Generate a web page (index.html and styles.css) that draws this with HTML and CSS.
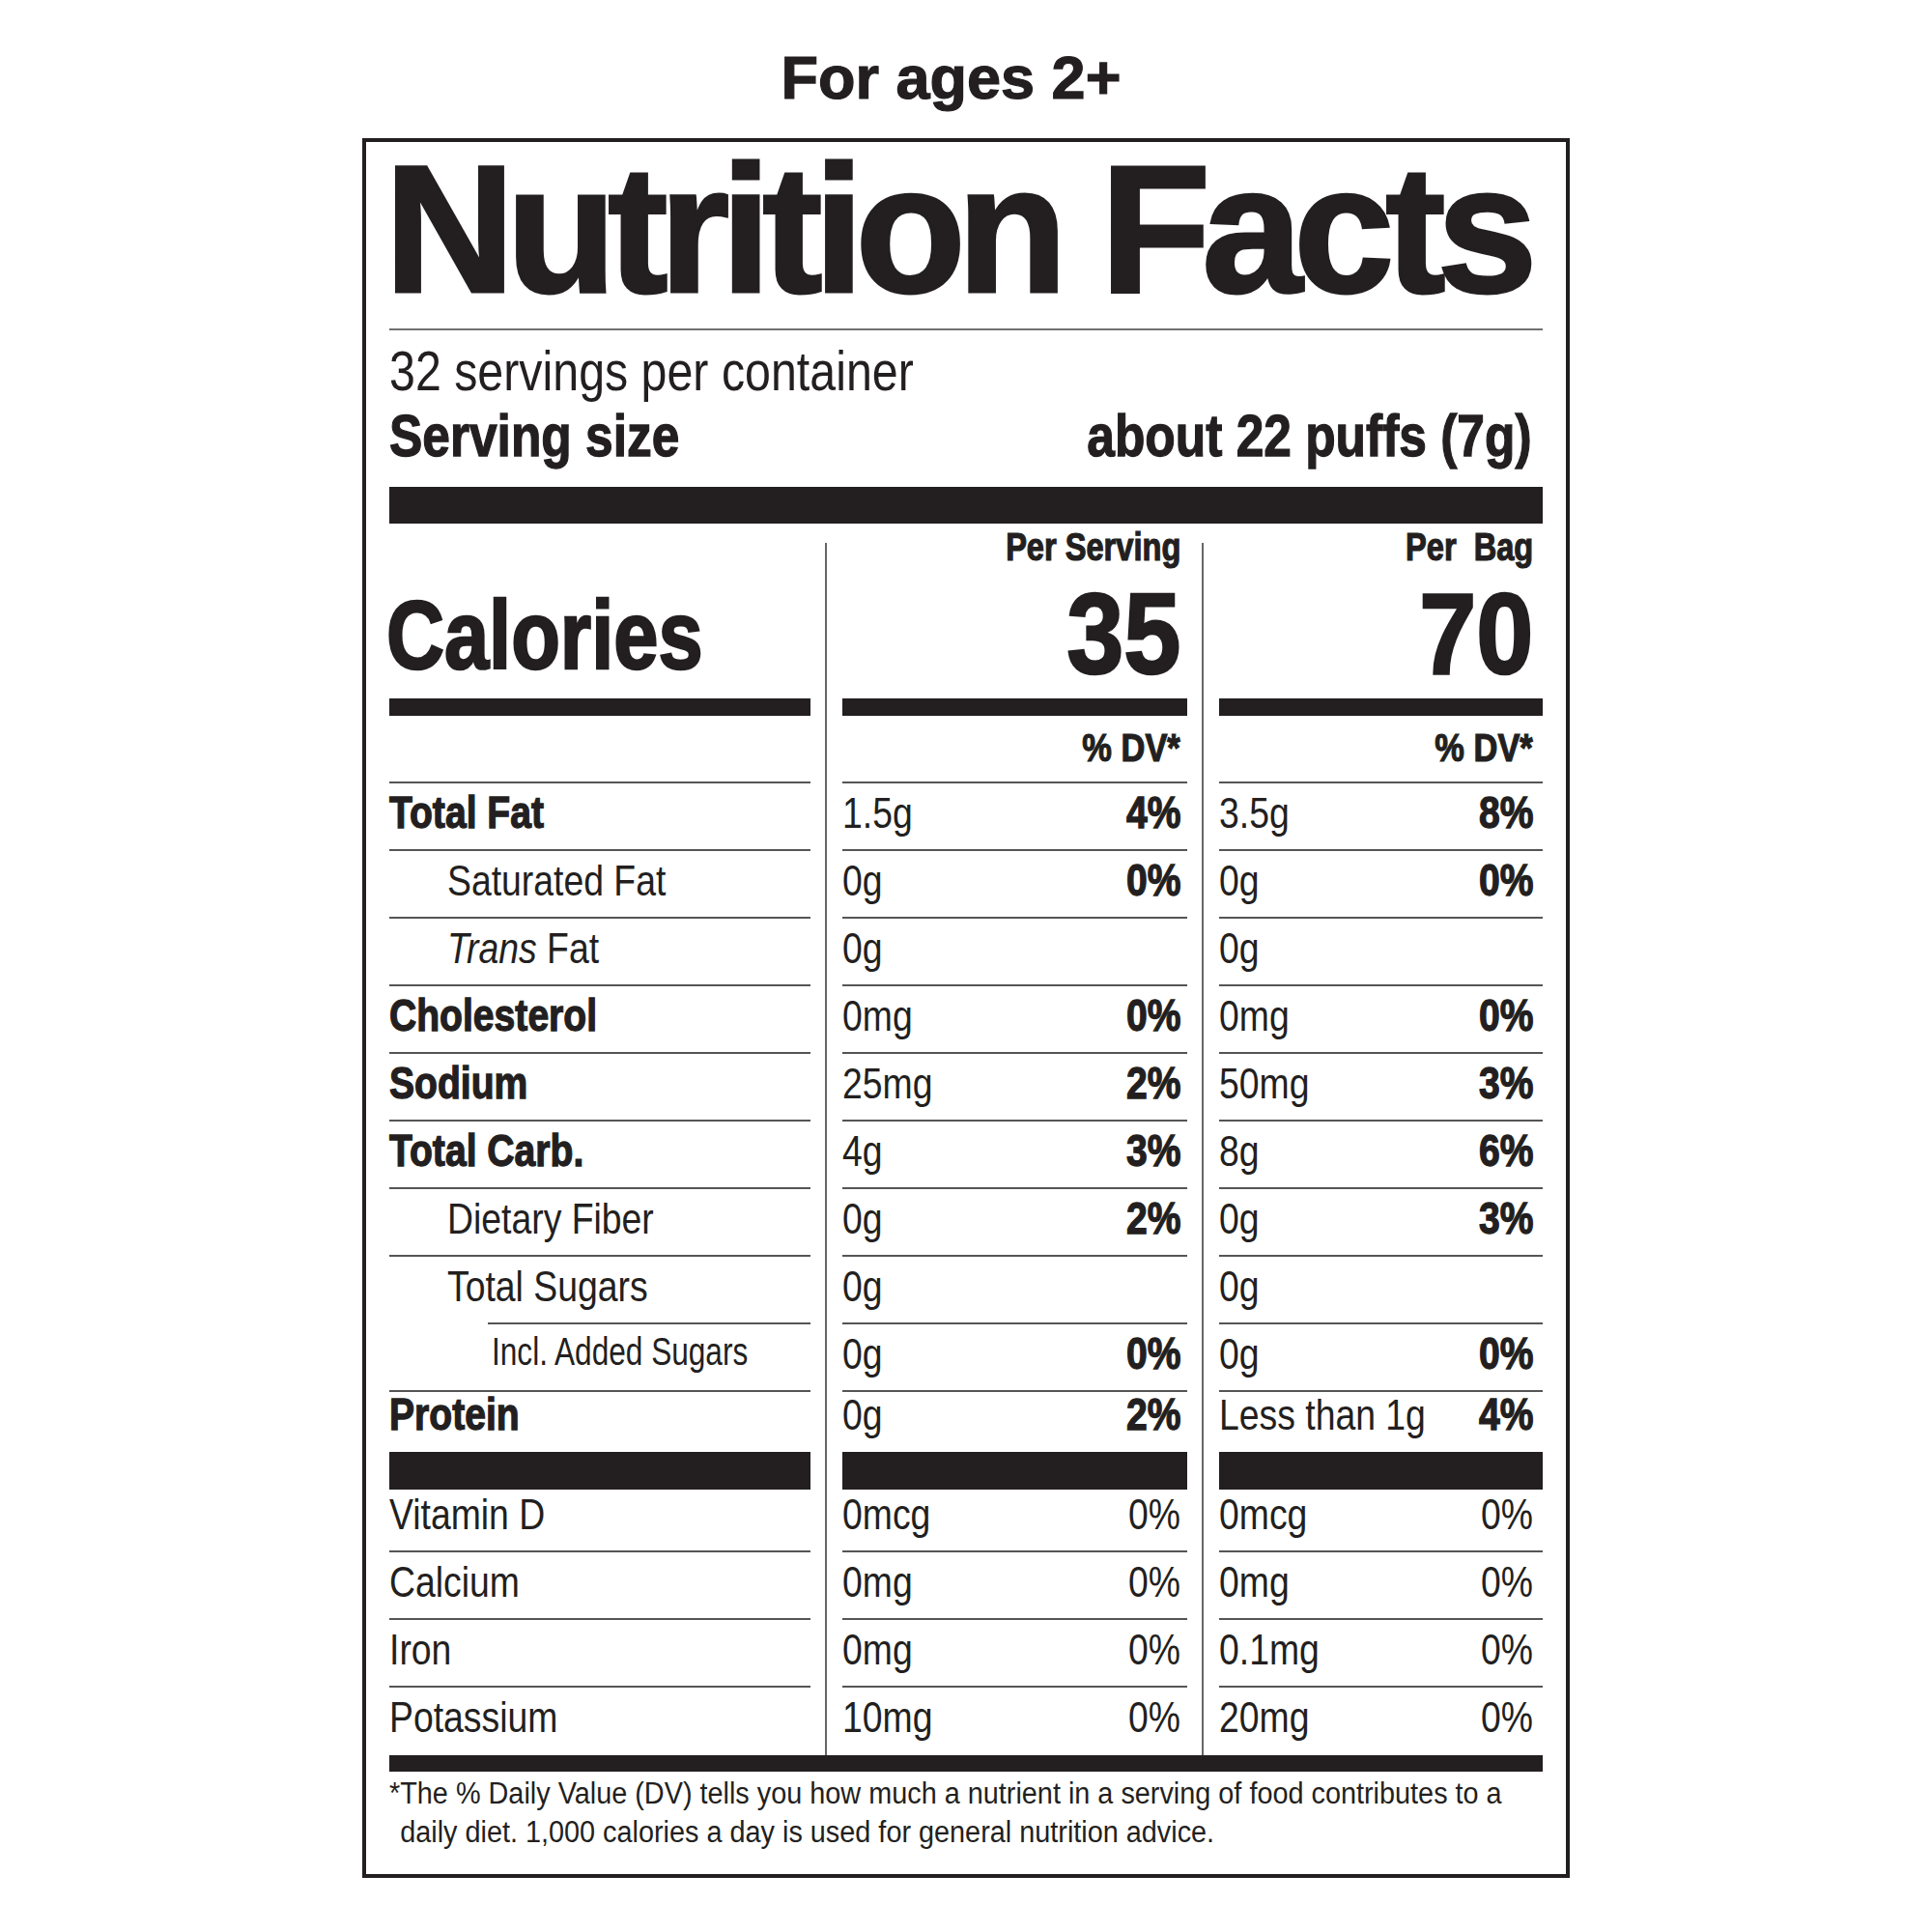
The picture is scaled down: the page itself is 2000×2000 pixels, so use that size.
FILE: index.html
```html
<!DOCTYPE html>
<html lang="en">
<head>
<meta charset="utf-8">
<title>Nutrition Facts</title>
<link rel="stylesheet" href="styles.css">
</head>
<body>
<div class="page">
  <div class="ages">For ages 2+</div>
  <section class="label">
    <h1 class="title">Nutrition Facts</h1>
    <div class="rule"></div>
    <p class="servings"><span class="cx">32 servings per container</span></p>
    <div class="size"><span class="cx">Serving size</span><span class="cx r">about 22 puffs (7g)</span></div>
    <div class="bar-top"></div>
    <div class="table">
      <div class="col col-name">
        <div class="head"><div class="cal"><span class="cx">Calories</span></div></div>
        <div class="bar-mid"></div>
        <div class="dv"></div>
        <div class="row b"><span class="cx">Total Fat</span></div>
        <div class="row sub"><span class="cx">Saturated Fat</span></div>
        <div class="row sub"><span class="cx"><i>Trans</i> Fat</span></div>
        <div class="row b"><span class="cx">Cholesterol</span></div>
        <div class="row b"><span class="cx">Sodium</span></div>
        <div class="row b"><span class="cx">Total Carb.</span></div>
        <div class="row sub"><span class="cx">Dietary Fiber</span></div>
        <div class="row sub"><span class="cx">Total Sugars</span></div>
        <div class="row added"><span class="cx">Incl. Added Sugars</span></div>
        <div class="row protein b"><span class="cx">Protein</span></div>
        <div class="bar-big"></div>
        <div class="row vit-first"><span class="cx">Vitamin D</span></div>
        <div class="row"><span class="cx">Calcium</span></div>
        <div class="row"><span class="cx">Iron</span></div>
        <div class="row last"><span class="cx">Potassium</span></div>
      </div>
      <div class="col col-serv">
        <div class="head">
          <div class="per"><span class="cx r">Per Serving</span></div>
          <div class="big-num"><span class="cx r">35</span></div>
        </div>
        <div class="bar-mid"></div>
        <div class="dv"><span class="cx r">% DV*</span></div>
        <div class="row"><span class="cx">1.5g</span><span class="cx r b">4%</span></div>
        <div class="row"><span class="cx">0g</span><span class="cx r b">0%</span></div>
        <div class="row"><span class="cx">0g</span></div>
        <div class="row"><span class="cx">0mg</span><span class="cx r b">0%</span></div>
        <div class="row"><span class="cx">25mg</span><span class="cx r b">2%</span></div>
        <div class="row"><span class="cx">4g</span><span class="cx r b">3%</span></div>
        <div class="row"><span class="cx">0g</span><span class="cx r b">2%</span></div>
        <div class="row"><span class="cx">0g</span></div>
        <div class="row"><span class="cx">0g</span><span class="cx r b">0%</span></div>
        <div class="row protein"><span class="cx">0g</span><span class="cx r b">2%</span></div>
        <div class="bar-big"></div>
        <div class="row vit-first"><span class="cx">0mcg</span><span class="cx r">0%</span></div>
        <div class="row"><span class="cx">0mg</span><span class="cx r">0%</span></div>
        <div class="row"><span class="cx">0mg</span><span class="cx r">0%</span></div>
        <div class="row last"><span class="cx">10mg</span><span class="cx r">0%</span></div>
      </div>
      <div class="col col-bag">
        <div class="head">
          <div class="per"><span class="cx r">Per&nbsp; Bag</span></div>
          <div class="big-num"><span class="cx r">70</span></div>
        </div>
        <div class="bar-mid"></div>
        <div class="dv"><span class="cx r">% DV*</span></div>
        <div class="row"><span class="cx">3.5g</span><span class="cx r b">8%</span></div>
        <div class="row"><span class="cx">0g</span><span class="cx r b">0%</span></div>
        <div class="row"><span class="cx">0g</span></div>
        <div class="row"><span class="cx">0mg</span><span class="cx r b">0%</span></div>
        <div class="row"><span class="cx">50mg</span><span class="cx r b">3%</span></div>
        <div class="row"><span class="cx">8g</span><span class="cx r b">6%</span></div>
        <div class="row"><span class="cx">0g</span><span class="cx r b">3%</span></div>
        <div class="row"><span class="cx">0g</span></div>
        <div class="row"><span class="cx">0g</span><span class="cx r b">0%</span></div>
        <div class="row protein"><span class="cx">Less than 1g</span><span class="cx r b">4%</span></div>
        <div class="bar-big"></div>
        <div class="row vit-first"><span class="cx">0mcg</span><span class="cx r">0%</span></div>
        <div class="row"><span class="cx">0mg</span><span class="cx r">0%</span></div>
        <div class="row"><span class="cx">0.1mg</span><span class="cx r">0%</span></div>
        <div class="row last"><span class="cx">20mg</span><span class="cx r">0%</span></div>
      </div>
    </div>
    <div class="bar-bottom"></div>
    <p class="foot"><span class="cx l1">*The % Daily Value (DV) tells you how much a nutrient in a serving of food contributes to a</span><span class="cx l2">daily diet. 1,000 calories a day is used for general nutrition advice.</span></p>
  </section>
</div>
</body>
</html>
```

FILE: styles.css
```css
body {
  margin: 0;
  background: #ffffff;
  color: #231f20;
  font-family: "Liberation Sans", Arial, sans-serif;
}

/* condensed rendering of the label face */
.cx {
  display: inline-block;
  transform: scaleX(var(--sx, 0.83));
  transform-origin: 0 50%;
  white-space: nowrap;
}

.cx.r {
  transform-origin: 100% 50%;
}

.page {
  padding-top: 49px;
}

.ages {
  font-weight: 700;
  font-size: 63px;
  line-height: 63px;
  text-align: center;
  padding-right: 31px;
  margin-bottom: 31px;
  -webkit-text-stroke: 1.2px #231f20;
}

.label {
  box-sizing: border-box;
  width: 1250px;
  margin: 0 auto;
  border: 4px solid #231f20;
  padding: 0 24px 23px;
}

.title {
  margin: 16px 0 0 -5px;
  font-weight: 700;
  font-size: 187px;
  line-height: 150px;
  letter-spacing: -9px;
  white-space: nowrap;
  -webkit-text-stroke: 3px #231f20;
}

.rule {
  height: 2px;
  background: #707070;
  margin-top: 27px;
}

.servings {
  --sx: 0.848;
  margin: 9px 0 0;
  font-size: 57px;
  line-height: 66px;
}

.size {
  --sx: 0.83;
  margin-top: 3px;
  display: flex;
  justify-content: space-between;
  font-weight: 700;
  font-size: 62px;
  line-height: 62px;
  padding-right: 11px;
  -webkit-text-stroke: 1.3px #231f20;
}

.bar-top {
  height: 38px;
  background: #231f20;
  margin-top: 22px;
}

.table {
  display: flex;
  margin-top: 20px;
}

.col-name {
  width: 436px;
  margin-right: 15px;
}

.col-serv {
  width: 357px;
  border-left: 2px solid #666666;
  padding-left: 16px;
  margin-right: 15px;
}

.col-bag {
  width: 335px;
  border-left: 2px solid #666666;
  padding-left: 16px;
}

.head {
  display: flow-root;
  height: 161px;
}

.cal {
  --sx: 0.83;
  padding-top: 45px;
  margin-left: -3px;
  font-weight: 700;
  font-size: 100px;
  line-height: 100px;
  -webkit-text-stroke: 2.5px #231f20;
}

.per {
  --sx: 0.815;
  margin-top: -16px;
  font-weight: 700;
  font-size: 40px;
  line-height: 40px;
  text-align: right;
  -webkit-text-stroke: 1.2px #231f20;
}

.big-num {
  --sx: 0.9;
  margin-top: 20px;
  font-weight: 700;
  font-size: 118px;
  line-height: 100px;
  text-align: right;
  -webkit-text-stroke: 2.5px #231f20;
}

.bar-mid {
  height: 18px;
  background: #231f20;
}

.bar-big {
  height: 39px;
  background: #231f20;
}

.bar-bottom {
  height: 17px;
  background: #231f20;
}

.dv {
  --sx: 0.84;
  height: 68px;
  font-weight: 700;
  font-size: 41px;
  line-height: 66px;
  text-align: right;
  -webkit-text-stroke: 1.2px #231f20;
}

.row {
  --sx: 0.83;
  display: flex;
  justify-content: space-between;
  border-top: 2px solid #555555;
  font-size: 45px;
  line-height: 61px;
  padding-bottom: 7px;
  white-space: nowrap;
}

.b {
  --sx: 0.85;
  font-weight: 700;
  font-size: 46px;
  -webkit-text-stroke: 1.3px #231f20;
}

.col-serv .per,
.col-serv .big-num,
.col-serv .dv,
.col-serv .row {
  padding-right: 7px;
}

.col-bag .per,
.col-bag .big-num,
.col-bag .dv,
.col-bag .row {
  padding-right: 10px;
}

.sub {
  padding-left: 60px;
}

.added {
  --sx: 0.79;
  margin-left: 102px;
  padding-left: 4px;
  font-size: 40px;
  line-height: 56px;
  padding-bottom: 12px;
}

.protein {
  line-height: 47px;
  padding-bottom: 15px;
}

.vit-first {
  border-top: 0;
  line-height: 51px;
  padding-bottom: 12px;
}

.last {
  padding-bottom: 9px;
}

.foot {
  --sx: 0.93;
  margin: 3px 0 0;
  font-size: 31px;
  line-height: 40px;
}

.foot .cx {
  display: block;
}

.foot .l2 {
  padding-left: 12px;
}
```
